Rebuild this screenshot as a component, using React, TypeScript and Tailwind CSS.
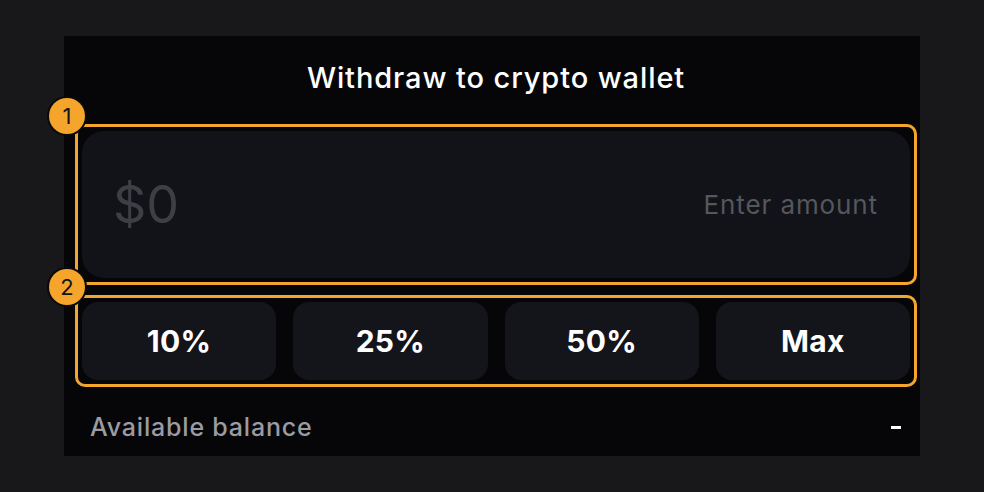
import type { ReactNode } from "react";

const presets = ["10%", "25%", "50%", "Max"];

function Marker({ n }: { n: number }) {
  return (
    <span className="absolute -left-[29px] -top-[29px] flex h-[36px] w-[36px] items-center justify-center rounded-full bg-[#f5a52b] text-[22px] font-normal text-[#141414] ring-2 ring-[#0a0a0c]">
      {n}
    </span>
  );
}

function Highlight({ n, children }: { n: number; children: ReactNode }) {
  return (
    <div className="relative rounded-[10px] border-[3px] border-[#f5a52b] p-[4px]">
      <Marker n={n} />
      {children}
    </div>
  );
}

export default function App() {
  return (
    <div
      className="h-[492px] w-full bg-[#18181a] pl-[64px] pt-[36px]"
      style={{ fontFamily: "Inter, 'Noto Sans', sans-serif" }}
    >
      <div className="flex h-[420px] w-[856px] flex-col bg-[#060609] pl-[11px] pr-[3px]">
        <h1 className="mt-[25px] text-center text-[29px] font-medium leading-[34px] tracking-[0.9px] text-white">
          Withdraw to crypto wallet
        </h1>

        <div className="mt-[29px]">
          <Highlight n={1}>
            <div className="flex h-[147px] items-center justify-between rounded-[22px] bg-[#121219] pl-[31px] pr-[32px]">
              <span className="text-[52px] font-normal text-[#3e3e45]">$0</span>
              <span className="text-[26px] font-normal tracking-[0.9px] text-[#56565d]">Enter amount</span>
            </div>
          </Highlight>
        </div>

        <div className="mt-[10px]">
          <Highlight n={2}>
            <div className="grid grid-cols-4 gap-[17px]">
              {presets.map((label) => (
                <button
                  key={label}
                  type="button"
                  className="flex h-[78px] items-center justify-center rounded-[16px] bg-[#14141b] text-[30px] font-bold tracking-[0.3px] text-white"
                >
                  {label}
                </button>
              ))}
            </div>
          </Highlight>
        </div>

        <div className="mt-[22px] flex items-center justify-between pl-[15px] pr-[16px]">
          <span className="text-[25px] font-medium tracking-[0.8px] text-[#9b9ba2]">Available balance</span>
          <span className="h-[3px] w-[10px] bg-white" />
        </div>
      </div>
    </div>
  );
}
